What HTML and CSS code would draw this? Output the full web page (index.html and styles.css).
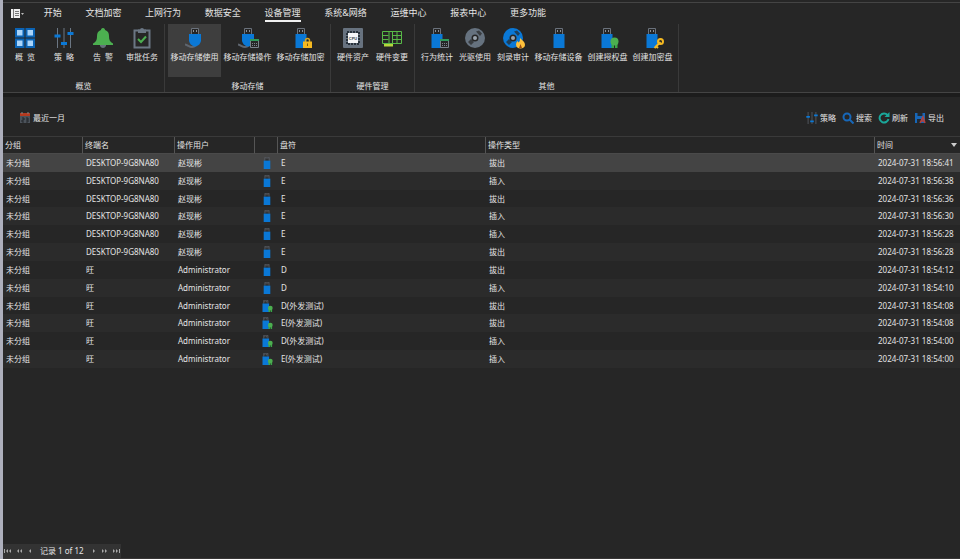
FILE: index.html
```html
<!DOCTYPE html>
<html lang="zh-CN">
<head>
    <meta charset="UTF-8">
    <meta name="viewport" content="width=device-width, initial-scale=1.0">
    <title>设备管理</title>
    <link rel="stylesheet" href="styles.css">
</head>
<body>
    <svg class="sprite" aria-hidden="true">
        <symbol id="usb" viewBox="0 0 20 20">
            <path d="M6.500 6V.5h7V6" fill="#262626" stroke="#6b727c"/>
            <path d="M8.500 2v2M11.500 2v2" stroke="#8a9099"/>
            <path d="M4.500 6h11v14h-11z" fill="#0a78d6"/>
        </symbol>
        <symbol id="plug" viewBox="0 0 20 20">
            <path d="M6.500 6V.5h7V6" fill="#262626" stroke="#6b727c"/>
            <path d="M8.500 2v2M11.500 2v2" stroke="#8a9099"/>
            <path d="M0 16.500c3 .5 4 2.500 7 2.500 2 0 3-1 4-2" fill="none" stroke="#5f6670" stroke-width="2"/>
            <path d="M4 6h12v7q-1 4-5 5.500h-2q-4-1.500-5-5.500z" fill="#0a78d6"/>
        </symbol>
        <symbol id="sliders" viewBox="0 0 20 20">
            <path d="M3.500 0v20M10 0v20M16.500 0v20" stroke="#6b7683"/>
            <path d="M.5 8h6M7 15.500h6M13.500 5.500h6" stroke="#0a78d6" stroke-width="3"/>
        </symbol>
        <symbol id="award" viewBox="0 0 20 20">
            <path d="M10.500 15h2.500v5h-2.500zM14 15h2.500v5h-2.500z" fill="#3aa648"/>
            <circle cx="13.500" cy="13.500" r="4" fill="#4caf50"/>
        </symbol>
        <symbol id="grid-badge" viewBox="0 0 20 20">
            <path d="M10.500 11.500h8v8h-8z" fill="#262626" stroke="#7a838c"/>
            <path d="M10 12h9" stroke="#2f9a5b" stroke-width="2"/>
            <path d="M12 15.500h5M12 17.500h5" stroke="#7a838c" stroke-dasharray="1 1"/>
        </symbol>
        <symbol id="disc" viewBox="0 0 20 20">
            <circle cx="10" cy="10" r="10"/>
            <path d="M11 3.500l3-1 3 3-2 2.500zM3 14l3-3 3 3-3 3z" fill="#262626" opacity=".7"/>
            <circle cx="10" cy="10" r="3.500" fill="#262626"/>
            <circle cx="10" cy="10" r="2" fill="#9aa3ad"/>
        </symbol>
    </svg>

    <div class="app">
        <header class="ribbon">
            <nav class="tabs">
                <button class="app-menu" aria-label="菜单">
                    <svg viewBox="0 0 14 9"><path d="M0 0h9v9H0z" fill="#eee"/><path d="M2.500 0v9M4 2.500h4M4 4.500h4M4 6.500h4" stroke="#777"/><path d="M10 4h3l-1.500 2z" fill="#bbb"/></svg>
                </button>
                <a href="#">开始</a>
                <a href="#">文档加密</a>
                <a href="#">上网行为</a>
                <a href="#">数据安全</a>
                <a href="#" class="active">设备管理</a>
                <a href="#">系统&amp;网络</a>
                <a href="#">运维中心</a>
                <a href="#">报表中心</a>
                <a href="#">更多功能</a>
            </nav>
            <div class="groups">
                <section class="group spaced">
                    <div class="tools">
                        <button class="tool">
                            <svg viewBox="0 0 20 20"><path d="M0 0h9.500v9.500H0zM10.500 0H20v9.500h-9.500zM0 10.500h9.500V20H0zM10.500 10.500H20V20h-9.500z" fill="#0b63b4"/><path d="M2 2h5.500v5.500H2zM12.500 2H18v5.500h-5.500zM2 12.500h5.500V18H2zM12.500 12.500H18V18h-5.500z" fill="#a9d4fa"/></svg>
                            <span>概&ensp;览</span>
                        </button>
                        <button class="tool">
                            <svg><use href="#sliders"/></svg>
                            <span>策&ensp;略</span>
                        </button>
                        <button class="tool">
                            <svg viewBox="0 0 20 20"><path d="M7 16h6v2q-1 2-3 2t-3-2z" fill="#66707b"/><path d="M10 0c1.500 0 2 1 2 2 3 1 4 3 4 6 0 4 1 6 4 7.500V17H0v-1.500C3 14 4 12 4 8c0-3 1-5 4-6 0-1 .5-2 2-2z" fill="#4caf50"/></svg>
                            <span>告&ensp;警</span>
                        </button>
                        <button class="tool">
                            <svg viewBox="0 0 20 20"><path d="M2.500 2.500h15v17h-15z" fill="none" stroke="#6b7683" stroke-width="2"/><path d="M6 1.500h2a2 1.500 0 0 1 4 0h2V5H6z" fill="#6b7683"/><path d="M6 11l3 3 5-5.500" fill="none" stroke="#4caf50" stroke-width="2"/></svg>
                            <span>审批任务</span>
                        </button>
                    </div>
                    <h2>概览</h2>
                </section>
                <section class="group">
                    <div class="tools">
                        <button class="tool wide selected">
                            <svg><use href="#plug"/></svg>
                            <span>移动存储使用</span>
                        </button>
                        <button class="tool wide">
                            <svg viewBox="0 0 20 20"><use href="#plug" width="20" height="20"/><use href="#grid-badge" x="2" width="20" height="20"/></svg>
                            <span>移动存储操作</span>
                        </button>
                        <button class="tool wide">
                            <svg viewBox="0 0 20 20"><use href="#usb" width="20" height="20"/><path d="M14.500 14v-1.500a1.500 1.500 0 0 1 4 0V14" fill="none" stroke="#d9a520" stroke-width="1.500"/><path d="M12 13.500h9V20h-9z" fill="#f5b921"/><path d="M16.500 15.500v2.500" stroke="#7a5a10"/></svg>
                            <span>移动存储加密</span>
                        </button>
                    </div>
                    <h2>移动存储</h2>
                </section>
                <section class="group spaced">
                    <div class="tools">
                        <button class="tool">
                            <svg viewBox="0 0 20 20"><rect width="20" height="20" rx="1" fill="#67727f"/><path d="M4 4h12v12H4z" fill="none" stroke="#28323c" stroke-width="2" stroke-dasharray="2 1"/><path d="M5 5h10v10H5z" fill="#f4f6f8"/><text x="10" y="11.500" text-anchor="middle" class="chip">CPU</text></svg>
                            <span>硬件资产</span>
                        </button>
                        <button class="tool">
                            <svg viewBox="0 0 20 20"><path d="M.5 3.500h19v12H.5zM7 3v12M10.500 3v12M15 3v12M.5 7.500h6M10 7.500h9.500M10 11.500h9.500M.5 11.500h6" fill="none" stroke="#58b947"/><path d="M2 16h9v2.500H2z" fill="#b5d63c"/></svg>
                            <span>硬件变更</span>
                        </button>
                    </div>
                    <h2>硬件管理</h2>
                </section>
                <section class="group">
                    <div class="tools">
                        <button class="tool">
                            <svg viewBox="0 0 20 20"><use href="#usb" width="20" height="20"/><use href="#grid-badge" x="3" width="20" height="20"/></svg>
                            <span>行为统计</span>
                        </button>
                        <button class="tool">
                            <svg fill="#66727f"><use href="#disc"/></svg>
                            <span>光驱使用</span>
                        </button>
                        <button class="tool">
                            <svg viewBox="0 0 20 20" fill="#0a78d6"><use href="#disc"/><path d="M17 10c3 3 5 4 5 7 0 2-2 3.500-4.500 3.500S13 19 13 16.500q0-2 1.500-3.500l1 1.500q2-1.500 1.500-4.500z" fill="#ffc13b"/><path d="M17.500 16l1.500 4h-3z" fill="#9b4a12"/></svg>
                            <span>刻录审计</span>
                        </button>
                        <button class="tool wide">
                            <svg><use href="#usb"/></svg>
                            <span>移动存储设备</span>
                        </button>
                        <button class="tool medium">
                            <svg viewBox="0 0 20 20"><use href="#usb" x="-1" width="20" height="20"/><use href="#award" x="3" width="20" height="20"/></svg>
                            <span>创建授权盘</span>
                        </button>
                        <button class="tool medium">
                            <svg viewBox="0 0 20 20"><use href="#usb" x="-1" width="20" height="20"/><path d="M11.500 20l6-6M12.500 17.500l2.500 2.500" stroke="#f5b921" stroke-width="2"/><circle cx="17.500" cy="13.500" r="2.500" fill="none" stroke="#f5b921" stroke-width="2"/></svg>
                            <span>创建加密盘</span>
                        </button>
                    </div>
                    <h2>其他</h2>
                </section>
            </div>
        </header>

        <div class="toolbar">
            <button class="action">
                <svg viewBox="0 0 12 12"><path d="M1 3h10v8H1z" fill="#4c535b"/><path d="M1 1h10v3H1z" fill="#b33a20"/><path d="M3 0v2M9 0v2" stroke="#888"/><path d="M3 6h2v2H3v2h2M7 6h2v4H7M7 8h2" fill="none" stroke="#23272b"/></svg>
                最近一月
            </button>
            <div class="actions">
                <button class="action"><svg><use href="#sliders"/></svg>策略</button>
                <button class="action"><svg viewBox="0 0 12 12"><circle cx="5" cy="5" r="3.500" fill="none" stroke="#1767b8" stroke-width="2"/><path d="M7.500 7.500l4 4" stroke="#1767b8" stroke-width="2"/></svg>搜索</button>
                <button class="action"><svg viewBox="0 0 12 12"><path d="M9.500 3a4.500 4.500 0 1 0 1 4" fill="none" stroke="#1aa79a" stroke-width="2"/><path d="M11.500 0v5h-5z" fill="#1aa79a"/></svg>刷新</button>
                <button class="action"><svg viewBox="0 0 12 12"><path d="M1 1h10v10H1z" fill="#1767b8"/><path d="M3.500 1h5v3h-5zM3 7h4v4H3z" fill="#222a33"/><path d="M6 11l3-6 2 6M7 9h4" fill="none" stroke="#b5423c" stroke-width="1.500"/></svg>导出</button>
            </div>
        </div>

        <main class="records">
            <table>
                <colgroup>
                    <col class="col-group"><col class="col-host"><col class="col-user"><col class="col-icon"><col class="col-drive"><col><col class="col-time">
                </colgroup>
                <thead>
                    <tr><th>分组</th><th>终端名</th><th>操作用户</th><th></th><th>盘符</th><th>操作类型</th><th class="sorted">时间</th></tr>
                </thead>
                <tbody>
                    <tr class="current"><td>未分组</td><td>DESKTOP-9G8NA80</td><td>赵现彬</td><td><svg><use href="#usb"/></svg></td><td>E</td><td>拔出</td><td>2024-07-31 18:56:41</td></tr>
                    <tr><td>未分组</td><td>DESKTOP-9G8NA80</td><td>赵现彬</td><td><svg><use href="#usb"/></svg></td><td>E</td><td>插入</td><td>2024-07-31 18:56:38</td></tr>
                    <tr><td>未分组</td><td>DESKTOP-9G8NA80</td><td>赵现彬</td><td><svg><use href="#usb"/></svg></td><td>E</td><td>拔出</td><td>2024-07-31 18:56:36</td></tr>
                    <tr><td>未分组</td><td>DESKTOP-9G8NA80</td><td>赵现彬</td><td><svg><use href="#usb"/></svg></td><td>E</td><td>插入</td><td>2024-07-31 18:56:30</td></tr>
                    <tr><td>未分组</td><td>DESKTOP-9G8NA80</td><td>赵现彬</td><td><svg><use href="#usb"/></svg></td><td>E</td><td>插入</td><td>2024-07-31 18:56:28</td></tr>
                    <tr><td>未分组</td><td>DESKTOP-9G8NA80</td><td>赵现彬</td><td><svg><use href="#usb"/></svg></td><td>E</td><td>拔出</td><td>2024-07-31 18:56:28</td></tr>
                    <tr><td>未分组</td><td>旺</td><td>Administrator</td><td><svg><use href="#usb"/></svg></td><td>D</td><td>拔出</td><td>2024-07-31 18:54:12</td></tr>
                    <tr><td>未分组</td><td>旺</td><td>Administrator</td><td><svg><use href="#usb"/></svg></td><td>D</td><td>插入</td><td>2024-07-31 18:54:10</td></tr>
                    <tr><td>未分组</td><td>旺</td><td>Administrator</td><td><svg viewBox="0 0 20 20"><use href="#usb" x="-2" width="20" height="20"/><use href="#award" x="2" width="20" height="20"/></svg></td><td>D(外发测试)</td><td>拔出</td><td>2024-07-31 18:54:08</td></tr>
                    <tr><td>未分组</td><td>旺</td><td>Administrator</td><td><svg viewBox="0 0 20 20"><use href="#usb" x="-2" width="20" height="20"/><use href="#award" x="2" width="20" height="20"/></svg></td><td>E(外发测试)</td><td>拔出</td><td>2024-07-31 18:54:08</td></tr>
                    <tr><td>未分组</td><td>旺</td><td>Administrator</td><td><svg viewBox="0 0 20 20"><use href="#usb" x="-2" width="20" height="20"/><use href="#award" x="2" width="20" height="20"/></svg></td><td>D(外发测试)</td><td>插入</td><td>2024-07-31 18:54:00</td></tr>
                    <tr><td>未分组</td><td>旺</td><td>Administrator</td><td><svg viewBox="0 0 20 20"><use href="#usb" x="-2" width="20" height="20"/><use href="#award" x="2" width="20" height="20"/></svg></td><td>E(外发测试)</td><td>插入</td><td>2024-07-31 18:54:00</td></tr>
                </tbody>
            </table>
        </main>

        <footer class="pager">
            <div class="pager-nav">
                <button aria-label="第一条"><svg viewBox="0 0 8 4"><path d="M0 0h1v4H0zM4 0v4L2 2zM7 0v4L5 2z"/></svg></button>
                <button aria-label="上一页"><svg viewBox="0 0 8 4"><path d="M4 0v4L2 2zM7 0v4L5 2z"/></svg></button>
                <button aria-label="上一条"><svg viewBox="0 0 8 4"><path d="M5 0v4L3 2z"/></svg></button>
                <span>记录 1 of 12</span>
                <button aria-label="下一条"><svg viewBox="0 0 8 4"><path d="M3 0v4l2-2z"/></svg></button>
                <button aria-label="下一页"><svg viewBox="0 0 8 4"><path d="M1 0v4l2-2zM4 0v4l2-2z"/></svg></button>
                <button aria-label="最后一条"><svg viewBox="0 0 8 4"><path d="M1 0v4l2-2zM4 0v4l2-2zM7 0h1v4H7z"/></svg></button>
            </div>
        </footer>
    </div>
</body>
</html>
```
FILE: styles.css
```css
* {
    box-sizing: border-box;
}
body {
    margin: 0;
    background: #262626;
    color: #e4e4e4;
    font: 8px/12px "Noto Sans", "Noto Sans CJK SC", sans-serif;
}
button {
    margin: 0;
    padding: 0;
    border: 0;
    background: none;
    color: inherit;
    font: inherit;
    white-space: nowrap;
}
a {
    color: inherit;
    text-decoration: none;
}
.sprite {
    display: none;
}
.app {
    min-height: 100vh;
    display: flex;
    flex-direction: column;
    border-left: 3px solid #adafbc;
}

/*
 * RIBBON
 */
.ribbon {
    margin-top: 2px;
    border-top: 1px solid #444;
    border-bottom: 1px solid #444;
}
.tabs {
    max-width: 543px;
    height: 21px;
    display: flex;
    align-items: center;
    justify-content: space-between;
    padding-left: 8px;
    font-size: 9px;
}
.tabs a {
    height: 17px;
    line-height: 15px;
    border-bottom: 2px solid transparent;
    white-space: nowrap;
}
.tabs a.active {
    border-color: #f0f0f0;
}
.app-menu {
    width: 9px;
    display: flex;
}
.app-menu svg {
    flex: none;
    width: 14px;
    height: 9px;
}
.groups {
    display: flex;
}
.group {
    padding: 0 3px;
    border-right: 1px solid #3a3a3a;
}
.tools {
    height: 53px;
    display: flex;
}
.spaced .tools {
    gap: 1px;
}
.tool {
    width: 38px;
    padding-top: 4px;
    display: flex;
    flex-direction: column;
    align-items: center;
    gap: 3px;
}
.tool.medium {
    width: 45px;
}
.tool.wide {
    width: 53px;
}
.tool.selected {
    background: #3e3e3e;
}
.tool svg {
    width: 20px;
    height: 20px;
    overflow: visible;
}
.chip {
    font: bold 4px "Liberation Sans", sans-serif;
    fill: #39434d;
}
.group h2 {
    margin: 3px 0 0;
    font-size: 8px;
    font-weight: normal;
    text-align: center;
}

/*
 * TOOLBAR
 */
.toolbar {
    height: 44px;
    padding: 2px 16px 0;
    display: flex;
    align-items: center;
    justify-content: space-between;
    border-top: 4px solid #1c1c1c;
    border-bottom: 1px solid #3a3a3a;
}
.actions {
    display: flex;
    gap: 6px;
}
.action {
    display: flex;
    align-items: center;
    gap: 2px;
}
.action svg {
    width: 12px;
    height: 12px;
}

/*
 * RECORDS
 */
.records {
    flex: 1;
}
table {
    width: 100%;
    height: 231px;
    table-layout: fixed;
    border-collapse: separate;
    border-spacing: 0;
}
.col-group { width: 80px; }
.col-host { width: 92px; }
.col-user { width: 80px; }
.col-icon { width: 23px; }
.col-drive { width: 208px; }
.col-time { width: 85px; }
th, td {
    padding: 0 3px;
    font-weight: normal;
    text-align: left;
    white-space: nowrap;
}
th {
    height: 17px;
    padding: 0 2px;
    border-right: 1px solid #555;
    border-bottom: 1px solid #4a4a4a;
}
th:last-child {
    border-right: 0;
}
.sorted::after {
    content: "";
    float: right;
    margin: 4px 1px 0 0;
    border: 3px solid transparent;
    border-top: 4px solid #ccc;
    border-bottom: 0;
}
tbody tr:nth-child(even) {
    background: #2b2b2b;
}
tbody tr.current {
    background: #444;
}
td svg {
    display: block;
    width: 12px;
    height: 12px;
    margin-left: 3px;
}

/*
 * PAGER
 */
.pager {
    border-bottom: 1px solid #383636;
}
.pager-nav {
    width: max-content;
    height: 14px;
    padding: 0 1px;
    display: flex;
    align-items: center;
    gap: 3px;
    background: #333;
}
.pager-nav span {
    margin: 0 3px;
}
.pager-nav button {
    display: flex;
}
.pager-nav svg {
    width: 8px;
    height: 4px;
    fill: #aaa;
}
```
